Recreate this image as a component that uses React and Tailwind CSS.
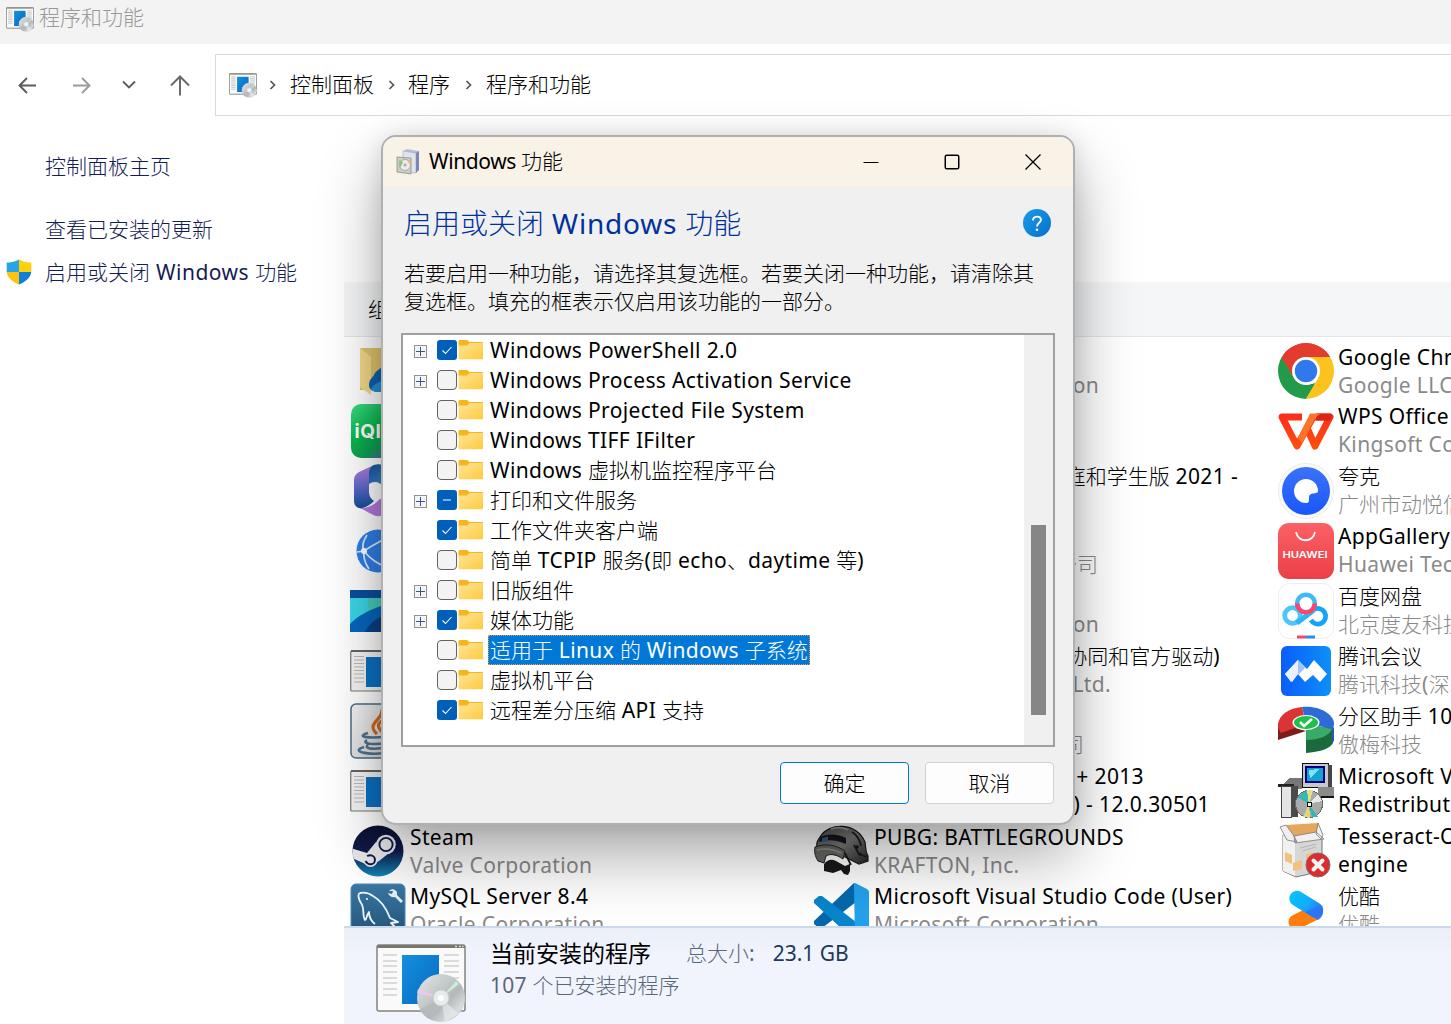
import React from "react";

function T({ children, latin = "tracking-[0.36px]" }) {
  const runs = String(children).match(/[\x20-\x7e]+|[^\x20-\x7e]+/g) || [];
  return runs.map((run, i) =>
    /[\x20-\x7e]/.test(run) ? (
      <span key={i} className={latin}>{run}</span>
    ) : (
      <span key={i} className="font-light">{run}</span>
    )
  );
}

function ProgramsIcon({ className, small }) {
  return (
    <svg viewBox="0 0 90 78" className={className}>
      <defs>
        <linearGradient id="pgBlue" x1="0" y1="0" x2="1" y2="1">
          <stop offset="0" stopColor="#1590de" />
          <stop offset="1" stopColor="#0568c0" />
        </linearGradient>
        <linearGradient id="pgDisc" x1="0" y1="0" x2="1" y2="1">
          <stop offset="0" stopColor="#e4e7e8" />
          <stop offset=".4" stopColor="#c3c8c9" />
          <stop offset=".6" stopColor="#b4b8ba" />
          <stop offset=".8" stopColor="#d9dcdd" />
          <stop offset="1" stopColor="#a9adaf" />
        </linearGradient>
      </defs>
      <rect x="1" y="1" width="88" height="66" rx="2" fill="#fafafa" stroke="#84847e" strokeWidth={small ? 3 : 1.5} />
      <path d="M1 4V3a2 2 0 0 1 2-2h84a2 2 0 0 1 2 2v1z" fill="#77776f" />
      <path d="M79 2.5h2M83 2.5h2M86 2.5h1.5" stroke="#ddd" strokeWidth="1.5" />
      <path d="M7 11h14M7 17h14M7 22h14M7 28h14M7 34h14M7 39h14M7 45h14M7 51h14M68 11h15M68 17h15M68 22h15M68 28h15M68 34h15" stroke="#b9b9b9" strokeWidth={small ? 2.4 : 1.2} />
      <rect x="26" y="11" width="37" height="49" fill="url(#pgBlue)" />
      <circle cx="65" cy="54" r="24" fill="url(#pgDisc)" />
      <path d="M65 54 42 45l-1 4z" fill="#eec9ef" />
      <path d="m65 54 15-17 3 3z" fill="#cdebd6" />
      <path d="m65 54 4 24 14-8z" fill="#e6e8e9" opacity=".7" />
      <path d="m65 54-22 12 9 9z" fill="#b4b8ba" opacity=".8" />
      <circle cx="65" cy="54" r="8" fill="#e9ecec" stroke="#c8ccd0" />
      <circle cx="65" cy="54" r="3" fill="#fff" />
    </svg>
  );
}

function Shield() {
  return (
    <svg viewBox="0 0 26 26" className="h-[26px] w-[26px] shrink-0">
      <defs>
        <clipPath id="shieldClip">
          <path d="M13 .5C10 2.5 5 3.6 .7 3.6V12c0 6.500 6 10.800 12.300 13.500C19.300 22.800 25.300 18.500 25.300 12V3.600C21 3.600 16 2.500 13 .5z" />
        </clipPath>
      </defs>
      <g clipPath="url(#shieldClip)">
        <path fill="#27a3e6" d="M0 0h13v13H0z" />
        <path fill="#ffcf0a" d="M13 0h13v13H13z" />
        <path fill="#ffc20e" d="M0 13h13v13H0z" />
        <path fill="#0f7fdb" d="M13 13h13v13H13z" />
      </g>
    </svg>
  );
}

const OneDriveFolder = () => (
  <>
    <path d="M10 5h40v42H10z" fill="#e2c56c" />
    <path d="m10 5 11 9v38l-11-8z" fill="#f3d98c" />
    <path d="M19 42c0-6 5-9 5-10 2-5 6-5 8-9h17v26H27c-5-1-8-3-8-7z" fill="#0a62b0" />
    <path d="M21 47c2-5 5-7 11-9h18v11H25z" fill="#2690d8" />
  </>
);
const IQiyi = () => (
  <>
    <defs>
      <linearGradient id="iqg" x1="0" y1="0" x2=".7" y2="1">
        <stop offset="0" stopColor="#3edc86" /><stop offset=".45" stopColor="#08b84c" /><stop offset=".75" stopColor="#0d9f54" /><stop offset="1" stopColor="#7454d8" />
      </linearGradient>
    </defs>
    <rect x="1" y="1" width="60" height="54" rx="10" fill="url(#iqg)" />
    <text x="4.500" y="34.500" fontSize="19" fontWeight="700" fill="#fff" letterSpacing=".6" fontFamily="Inter, sans-serif">iQIYI</text>
  </>
);
const M365 = () => (
  <>
    <defs>
      <linearGradient id="m3a" x1="0" y1="0" x2="0" y2="1"><stop offset="0" stopColor="#bb7fe0" /><stop offset=".55" stopColor="#5668c8" /><stop offset="1" stopColor="#134e96" /></linearGradient>
      <linearGradient id="m3b" x1="0" y1="0" x2="1" y2="1"><stop offset="0" stopColor="#164f98" /><stop offset="1" stopColor="#4aa2e6" /></linearGradient>
    </defs>
    <path d="M10 45c9 0 14-3 20-9h16v9L30 53c-5 1-8-2-20-8z" fill="#b579de" />
    <path d="M24 2 9 9c-3 2-5 4-5 8v21c0 5 4 8 8 7 5-1 9-4 12-7-3-2-5-5-5-9V12z" fill="url(#m3a)" />
    <path d="M24 2c-4 2-5 5-5 9v10c4-3 11-3 14 3h13V10L34 3c-3-2-7-2-10-1z" fill="url(#m3b)" />
  </>
);
const Globe = () => (
  <>
    <circle cx="28" cy="28" r="21.500" fill="#2f7fe8" />
    <path d="M14 28c8-6 18-10 34-20M14 28c6 8 12 12 30 20M14 28c-2-4-1-10 3-16M14 28c-1 7 1 12 5 18M7 29l7-1" stroke="#dfeafd" strokeWidth="1.700" fill="none" />
    <circle cx="14" cy="28" r="3" fill="#fff" />
  </>
);
const Waves = () => (
  <>
    <path d="M0 7h56v42H0z" fill="#3bd5e6" />
    <path d="M18 15h38v12H18z" fill="#48cdb8" />
    <path d="M0 7h56v8H0z" fill="#0a4f9c" />
    <path d="M0 41c8-8 18-14 34-19h22v27H0z" fill="#0567bd" />
    <path d="M15 49c4-8 10-13 20-17h21v17z" fill="#0c3f86" />
  </>
);
const WindowGlyph = () => (
  <>
    <rect x=".75" y="8" width="56" height="40" rx="1" fill="#f4f4f4" stroke="#77776f" strokeWidth="1.200" />
    <path d="M1 8h56" stroke="#66665f" strokeWidth="2" />
    <path d="M4 13.500h10M4 17h10M4 20.500h10M4 24h10M4 27.500h10M4 31h10M4 35h10M4 39h10" stroke="#b9b9b9" />
    <path d="M16 14h30v30H16z" fill="#0c72c4" />
  </>
);
const Java = () => (
  <>
    <defs><linearGradient id="jvg" x1="0" y1="0" x2="1" y2="1"><stop offset="0" stopColor="#f2f2f2" /><stop offset="1" stopColor="#cfcfcf" /></linearGradient></defs>
    <rect x="1" y="1" width="60" height="54" rx="5" fill="url(#jvg)" stroke="#4c6c87" strokeWidth="1.500" />
    <path d="M27 31c-12-11 7-14 5-25M33 30c-8-8-5-10 4-16" fill="none" stroke="#d2691e" strokeWidth="3.200" />
    <path d="M18 30c-14 4 3 6 20 3M17 37c-6 4 6 5 21 3M18 42c-5 4 7 5 19 2M14 44c-16 5 8 9 28 5" fill="none" stroke="#4f7391" strokeWidth="2.600" />
  </>
);
const Steam = () => (
  <>
    <defs>
      <linearGradient id="stg" x1="0" y1="0" x2="0" y2="1"><stop offset="0" stopColor="#0b1230" /><stop offset=".5" stopColor="#10194a" /><stop offset="1" stopColor="#1186b5" /></linearGradient>
      <clipPath id="stc"><circle cx="28" cy="28" r="25.500" /></clipPath>
    </defs>
    <circle cx="28" cy="28" r="25.500" fill="url(#stg)" />
    <g clipPath="url(#stc)">
      <path d="M0 25 17 30 26 19l18 7-15 12-9 5L0 34z" fill="#e8e8e8" />
      <circle cx="36" cy="21.500" r="9.800" fill="#e8e8e8" />
      <circle cx="36" cy="21.500" r="6.600" fill="none" stroke="#10194a" strokeWidth="1.900" />
      <circle cx="20.500" cy="37" r="7" fill="#e8e8e8" />
      <path d="M15.500 38c3 5 9 4 9.500-1 0-4-4-6-8-4" fill="none" stroke="#10194a" strokeWidth="1.900" />
    </g>
  </>
);
const MySQL = () => (
  <>
    <defs><linearGradient id="myg" x1="0" y1="0" x2="0" y2="1"><stop offset="0" stopColor="#3b78a5" /><stop offset="1" stopColor="#1d4e70" /></linearGradient></defs>
    <rect x="1" y="1" width="54" height="60" rx="5" fill="url(#myg)" stroke="#4d8bb8" />
    <path d="M25 41c-4-3-6-8-6-12-3 4-2 7-4 8-3-4 0-12-4-17-2-3-4-9-1-10 5-1 9 0 13 3 9 5 14 14 17 22l8 4-7 1 4 4" fill="none" stroke="#eef6fc" strokeWidth="1.800" strokeLinejoin="round" />
    <circle cx="17" cy="16" r="1" fill="#fff" />
    <path d="M39 8c3-3 6-2 8 1v3l6 6-2 2-6-6c-3 1-6-1-7-4l4 1 1-3z" fill="#e8eef3" />
  </>
);
const Helmet = () => (
  <>
    <defs><linearGradient id="hlg" x1="0" y1="0" x2="1" y2="1"><stop offset="0" stopColor="#4b4d4b" /><stop offset=".5" stopColor="#7b7c7a" /><stop offset="1" stopColor="#1f2020" /></linearGradient></defs>
    <path d="M10 41c4-5 8-5 12-3l9 5 5-2v7l-2 4-4-1-3-4-8 3-9-2z" fill="#191919" />
    <path d="M6 14C15-1 43-1 51 19c1 5 0 9 3 14v5l-9 3-14-7-26-6c-4-7-2-10 1-14z" fill="url(#hlg)" stroke="#191a1a" strokeWidth="1.200" />
    <path d="M6 14c9-4 18-3 26 1v6c-9-4-18-5-27-2z" fill="#14161d" />
    <path d="M8 15l6-1.500v5L8 19z" fill="#3b5c78" />
    <path d="M1 24c11-4 21-2 30 4l-2 8c-6-4-12-6-17-3l-2 7-6-2c-3-5-4-9-3-14z" fill="#666763" stroke="#202121" />
    <path d="M3 27c9-2 16-1 24 3" stroke="#8f908b" strokeWidth="1.500" fill="none" />
    <path d="M31 30l6 12M40 22l5 9 8 3M38 9c5 3 8 8 9 14" stroke="#1b1b1b" strokeWidth="1.800" fill="none" />
    <circle cx="43" cy="24" r="1.800" fill="#161616" /><circle cx="46" cy="31" r="1.600" fill="#161616" />
    <path d="M17 6c5-2 12-2 17 1" stroke="#a3a4a0" strokeWidth="1.500" fill="none" />
  </>
);
const VSCode = () => (
  <g transform="translate(-1 0)">
    <path d="M41 0 1 38v3l5 4h3l34-26z" fill="#0568ad" />
    <path d="M1 17l5-4h3l34 26v20L1 20z" fill="#0785cc" />
    <path d="M41 0c1 0 2 0 3 1l10 5c1 1 2 2 2 3v51H42z" fill="#23a2ec" />
  </g>
);
const Chrome = () => (
  <>
    <defs><clipPath id="chc"><circle cx="28" cy="28" r="28" /></clipPath></defs>
    <g clipPath="url(#chc)">
      <path d="M0 0h56v14H28L16 35 3 14z" fill="#e33b2e" />
      <path d="M3.700 14 16 35l12 7 10-2-10 16H0V14z" fill="#229a49" />
      <path d="M28 14h28v42H28l12.100-21z" fill="#fcc31e" />
      <path d="M28 14h24.300A28 28 0 0 0 3.700 14L15.900 35A14 14 0 0 1 28 14z" fill="#e33b2e" />
    </g>
    <circle cx="28" cy="28" r="14" fill="#fff" />
    <circle cx="28" cy="28" r="11.200" fill="#3079ec" />
  </>
);
const WPS = () => (
  <>
    <defs><linearGradient id="wpg" x1="0" y1="10" x2="0" y2="46" gradientUnits="userSpaceOnUse"><stop offset="0" stopColor="#fa2c1c" /><stop offset="1" stopColor="#ff4f0c" /></linearGradient></defs>
    <path d="M24 14H4L19 43 35 14M29 25l8 18L52 14H38" fill="none" stroke="url(#wpg)" strokeWidth="7" strokeLinejoin="round" />
    <path d="M39 10.500h13.500c1.500 0 2 1 1.500 2.500l-2 4.500H37z" fill="#dd2412" />
    <path d="M32 10.500h12c-4 1-6 3-8 7L24 41l-4-6z" fill="#fd7428" />
  </>
);
const Quark = () => (
  <>
    <defs><linearGradient id="qkg" x1="0" y1="0" x2="0" y2="1"><stop offset="0" stopColor="#3c72fa" /><stop offset="1" stopColor="#1857fb" /></linearGradient></defs>
    <circle cx="28" cy="28" r="27.500" fill="#fafafa" stroke="#ececee" />
    <circle cx="28" cy="28" r="24" fill="url(#qkg)" />
    <path d="M28 40a12 12 0 1 1 12-12c0 4-9 0-9 7 0 3 0 5-3 5z" fill="#fff" />
  </>
);
const Huawei = () => (
  <>
    <defs><linearGradient id="hwg" x1="0" y1="0" x2="0" y2="1"><stop offset="0" stopColor="#fb6165" /><stop offset="1" stopColor="#ec3f48" /></linearGradient></defs>
    <rect width="56" height="56" rx="11" fill="url(#hwg)" />
    <path d="M18 9c2 11 17 11 19 0" fill="none" stroke="#fff" strokeWidth="1.800" />
    <text x="4.500" y="34.700" fontSize="9.300" fontWeight="600" fill="#fff" textLength="45" lengthAdjust="spacingAndGlyphs" fontFamily="Inter, sans-serif">HUAWEI</text>
  </>
);
const Baidu = () => (
  <>
    <rect x=".5" y=".5" width="55" height="55" rx="11" fill="#fff" stroke="#eee" />
    <circle cx="14.500" cy="32.500" r="7.800" fill="none" stroke="#4cc6fb" strokeWidth="4.800" />
    <path d="M33 37a7.800 7.800 0 1 0 3-10.500" fill="none" stroke="#12a4fa" strokeWidth="4.800" />
    <path d="M19 40 36 27" stroke="#2fb4f9" strokeWidth="4.800" />
    <path d="M37 40 20 27" stroke="#fff" strokeWidth="0" />
    <circle cx="28" cy="20.500" r="8.800" fill="#fff" stroke="#3fb9f7" strokeWidth="4.500" />
    <path d="M19.200 20.500a8.800 8.800 0 0 0 17.600 0" fill="none" stroke="#f8476e" strokeWidth="4.500" />
    <path d="M19 52.500h9v3h-9z" fill="#f8476e" /><path d="M28 52.500h9v3h-9z" fill="#2191f4" />
  </>
);
const Tencent = () => (
  <>
    <defs><linearGradient id="txg" x1="0" y1="0" x2="1" y2="0"><stop offset="0" stopColor="#0a5cfc" /><stop offset="1" stopColor="#0d90f8" /></linearGradient></defs>
    <rect x="3" y="3" width="50" height="50" rx="6" fill="url(#txg)" />
    <path d="m7 31 13-14 9 9 7-9 13 14-7 8-7-7-8 7-7-8-6 8z" fill="#fff" />
    <path d="m7 31 13-14v14l-7 8z" fill="#eaf0fd" /><path d="m20 17 7 8-7 7z" fill="#9fc3fb" />
  </>
);
const Partition = () => (
  <>
    <path d="M0 20v17l28-9z" fill="#7c1c1c" />
    <path d="M28 28v22c13-1 24-4 27-10V22z" fill="#1b6a3d" />
    <path d="M54 26c2-1 2-4 2-6v18l-2 2z" fill="#2a57b4" />
    <path d="M0 21C1 12 11 5 24 4l4 17L3 30C1 27 0 25 0 21z" fill="#dc3434" />
    <path d="M24 4c18-2 33 8 32 18l-2 4-26-6z" fill="#2f6bd6" />
    <path d="M28 20l26 6c-3 7-13 11-26 11z" fill="#3aaa68" />
    <ellipse cx="28" cy="19.500" rx="13.500" ry="7.500" fill="#fff" /><ellipse cx="28" cy="19.500" rx="12" ry="6.500" fill="#1fbf4b" />
    <path d="m22 19 4 4 8-7" stroke="#fff" strokeWidth="2.600" fill="none" />
  </>
);
const Redist = () => (
  <g shapeRendering="crispEdges">
    <path d="M24 0h26v24H24z" fill="#c9c9c9" stroke="#111" />
    <path d="M50 2h4v22h-4z" fill="#444" />
    <path d="M27 3h20v17H27z" fill="#000084" />
    <path d="M29 5h16v13H29z" fill="#12a3cf" /><path d="M31 7l10-1-9 10z" fill="#80e4f4" />
    <path d="M40 24h16v9H40z" fill="#8a8a8a" /><path d="M40 33h16v2H40z" fill="#111" />
    <path d="M3 23l9-8h12v11H3z" fill="#777" /><path d="M0 21h16v3H0z" fill="#222" />
    <path d="M3 23h10v31H3z" fill="#e4e4e4" stroke="#444" /><path d="M13 23h7v31h-7z" fill="#4a4a4a" />
    <circle cx="31" cy="41" r="13.500" fill="#aaa" stroke="#666" />
    <path d="M31 41 19 34l10-7z" fill="#36b8b4" /><path d="M31 41l-2-14h6z" fill="#e4e184" /><path d="M31 41l3 13h6z" fill="#31b7b3" /><path d="M31 41l-6 13 7 1z" fill="#ded778" /><path d="M31 41l13-3-4-7z" fill="#e8e8e8" />
    <path d="M29 39h5v5h-5z" fill="#111" /><path d="M30 40h3v3h-3z" fill="#fff" />
  </g>
);
const Tesseract = () => (
  <>
    <path d="M5 12 17 17l27-3v34l-26 6L5 48z" fill="#d6d6d6" stroke="#777" />
    <path d="M5 12l12 6v35L5 48z" fill="#f1f1f1" />
    <path d="M8 2l32-2 5 12-27 4z" fill="#e3a85b" />
    <path d="M8 2 2 4l7 13 10 2-3-6zM40 0l5 12-2 4-5-5zM16 13l22-4 8 7-29 4z" fill="#f0f0f0" stroke="#777" strokeWidth=".8" />
    <path d="M7 29l7 3v9l-7-3zM15 40l9-3v9l-9 2zM28 31l8-2v9l-8 2z" fill="#f2c27c" />
    <path d="M22 25l16-4M24 28l14-4" stroke="#b5b5b5" />
    <circle cx="40" cy="42" r="12" fill="#dc2c30" stroke="#8b6b6c" />
    <path d="m35.500 37.500 9 9m0-9-9 9" stroke="#f3f3f3" strokeWidth="4" strokeLinecap="round" />
  </>
);
const Youku = () => (
  <>
    <defs><linearGradient id="ykg" x1="11" y1="8" x2="45" y2="36" gradientUnits="userSpaceOnUse"><stop offset="0" stopColor="#04c8fd" /><stop offset=".5" stopColor="#12acfc" /><stop offset="1" stopColor="#2b62f4" /></linearGradient></defs>
    <path d="M36 30 18 39" stroke="#ff7d0c" strokeWidth="15" strokeLinecap="round" />
    <path d="M19 15.500 37.500 27" stroke="url(#ykg)" strokeWidth="15.500" strokeLinecap="round" />
    <path d="M27 29l14-6c6 4 5 10-1 14z" fill="#2f72f5" opacity=".9" />
  </>
);

const PROGRAMS = [
  { icon: OneDriveFolder }, { icon: IQiyi }, { icon: M365 }, { icon: Globe }, { icon: Waves },
  { icon: WindowGlyph }, { icon: Java }, { icon: WindowGlyph },
  { icon: Steam, name: "Steam", by: "Valve Corporation" },
  { icon: MySQL, name: "MySQL Server 8.4", by: "Oracle Corporation" },
  { by: "Microsoft Corporation", fit: "w-[224px]" },
  {},
  { name: "家庭和学生版 2021 -", fit: "w-[364px]" },
  { by: "公司", fit: "w-[224px]" },
  { by: "Microsoft Corporation", fit: "w-[224px]" },
  { name: "协同和官方驱动)", by: "Ltd.", fit: "w-[346px]", byFit: "w-[237px]" },
  { by: "公司", fit: "w-[210px]" },
  { name: "+ 2013", name2: "(x86) - 12.0.30501", fit: "w-[270px]", byFit: "w-[336px]" },
  { icon: Helmet, name: "PUBG: BATTLEGROUNDS", by: "KRAFTON, Inc." },
  { icon: VSCode, name: "Microsoft Visual Studio Code (User)", by: "Microsoft Corporation" },
  { icon: Chrome, name: "Google Chrome", by: "Google LLC" },
  { icon: WPS, name: "WPS Office", by: "Kingsoft Corp." },
  { icon: Quark, name: "夸克", by: "广州市动悦信息" },
  { icon: Huawei, name: "AppGallery", by: "Huawei Technologies" },
  { icon: Baidu, name: "百度网盘", by: "北京度友科技" },
  { icon: Tencent, name: "腾讯会议", by: "腾讯科技(深圳)" },
  { icon: Partition, name: "分区助手 10.4", by: "傲梅科技" },
  { icon: Redist, name: "Microsoft Visual", name2: "Redistributable" },
  { icon: Tesseract, name: "Tesseract-OCR", name2: "engine" },
  { icon: Youku, name: "优酷", by: "优酷" },
];

function Program({ icon: Icon, name, name2, by, fit, byFit, first }) {
  const align = fit ? "text-right " + fit : "";
  const align2 = fit ? "text-right " + (byFit || fit) : "";
  return (
    <div className="flex h-[60px] items-start gap-1 whitespace-nowrap">
      <svg viewBox="0 0 56 56" className="h-14 w-14 shrink-0 overflow-visible">{Icon && <Icon />}</svg>
      <div className={first ? "leading-7" : "-mt-px leading-7"}>
        <div className={"h-7 text-black " + align}><T>{name || ""}</T></div>
        <div className={(name2 ? "h-7 text-black " : "h-7 text-[#8a8a8a] ") + align2}><T>{name2 || by || ""}</T></div>
      </div>
    </div>
  );
}

const FEATURES = [
  ["Windows PowerShell 2.0", "on", true],
  ["Windows Process Activation Service", "off", true],
  ["Windows Projected File System", "off"],
  ["Windows TIFF IFilter", "off"],
  ["Windows 虚拟机监控程序平台", "off"],
  ["打印和文件服务", "some", true],
  ["工作文件夹客户端", "on"],
  ["简单 TCPIP 服务(即 echo、daytime 等)", "off"],
  ["旧版组件", "off", true],
  ["媒体功能", "on", true],
  ["适用于 Linux 的 Windows 子系统", "off", false, true],
  ["虚拟机平台", "off"],
  ["远程差分压缩 API 支持", "on"],
];

function Feature({ label, state, expandable, selected }) {
  return (
    <div className="flex h-[30px] items-center">
      <span className="mt-0.5 flex h-[13px] w-[13px] shrink-0">
        {expandable && (
          <svg viewBox="0 0 13 13" className="h-[13px] w-[13px]" shapeRendering="crispEdges">
            <rect x=".5" y=".5" width="12" height="12" fill="#f4f4f4" stroke="#919191" />
            <path d="M2 6.500h9M6.500 2v9" stroke="#38549a" />
          </svg>
        )}
      </span>
      <svg viewBox="0 0 20 20" className="ml-[10px] h-5 w-5 shrink-0">
        {state === "off" ? (
          <rect x=".5" y=".5" width="19" height="19" rx="3.500" fill="#f3f3f3" stroke="#626262" />
        ) : (
          <rect width="20" height="20" rx="3" fill="#005fb8" />
        )}
        {state === "on" && <path d="m5.500 10.500 3 3 6-6.500" fill="none" stroke="#fff" strokeWidth="1.100" />}
        {state === "some" && <path d="M6 10h8" stroke="#9cc4e6" strokeWidth="1.600" />}
      </svg>
      <svg viewBox="0 0 25 20" className="ml-px h-5 w-[25px] shrink-0">
        <defs><linearGradient id="fold" x1="0" y1="0" x2="1" y2="1"><stop offset="0" stopColor="#ffe59c" /><stop offset="1" stopColor="#ffcb3c" /></linearGradient></defs>
        <path d="M.5 1.500C.5.500 1 0 2 0h7l2.500 2H24c.5 0 1 .5 1 1v4H.5z" fill="#f7b41c" />
        <path d="M.5 5.500h8.500l2.500-2.500H25v15c0 .8-.4 1.300-1 1.300H1.500c-.6 0-1-.5-1-1z" fill="url(#fold)" />
      </svg>
      <span
        className={
          "ml-[5px] h-[30px] whitespace-nowrap border border-dotted px-[1px] leading-[28px] " +
          (selected ? "border-[#f59a3a] bg-[#0078d7] text-white" : "border-transparent text-black")
        }
      >
        <T>{label}</T>
      </span>
    </div>
  );
}

function Crumb() {
  return (
    <svg viewBox="0 0 8 12" className="h-3 w-2 shrink-0">
      <path d="m1.500 2 4 4-4 4" fill="none" stroke="#555" strokeWidth="1.700" />
    </svg>
  );
}

function Dialog() {
  return (
    <div className="absolute left-[381px] top-[135px] flex h-[690px] w-[694px] flex-col overflow-hidden rounded-[15px] border-2 border-[#b0b0b0] bg-[#f0f0f0] shadow-[0_32px_64px_rgba(0,0,0,0.33),0_2px_24px_rgba(0,0,0,0.12)]">
      <div className="flex h-[50px] shrink-0 items-center bg-[#f9f2e7] pl-3">
        <svg viewBox="0 0 26 28" className="h-7 w-[26px]">
          <path d="M8 3 12 1l12 2-3 3z" fill="#b9bedb" />
          <path d="M8 3l13 2v20L8 24z" fill="#dfe3ee" stroke="#a0a5ba" strokeWidth=".6" />
          <path d="M21 5l3-2v19l-3 3z" fill="#7d86b8" />
          <path d="M2 9l14 1v16L2 24z" fill="#c9cec8" stroke="#8c8f8b" strokeWidth=".8" />
          <circle cx="10" cy="17" r="5.500" fill="#eeeaea" stroke="#a9a9a9" /><circle cx="10" cy="17" r="1.500" fill="#aaa" />
          <path d="M4 12l4 2-3 6z" fill="#8bc26a" /><path d="M13 14l3-3v6z" fill="#dfb36b" />
        </svg>
        <span className="-mt-0.5 ml-[8px]"><T latin="tracking-[-0.4px]">Windows 功能</T></span>
        <div className="-mt-px ml-auto flex items-center pr-[32px]">
          <svg viewBox="0 0 16 16" className="h-4 w-4"><path d="M.5 8.500h15" stroke="#000" /></svg>
          <svg viewBox="0 0 16 16" className="ml-[65px] h-4 w-4"><rect x="1.250" y="1.250" width="13.500" height="13.500" rx="1.500" fill="none" stroke="#000" strokeWidth="1.500" /></svg>
          <svg viewBox="0 0 16 16" className="ml-[65px] h-4 w-4"><path d="m.5.5 15 15m0-15-15 15" stroke="#000" strokeWidth="1.300" /></svg>
        </div>
      </div>
      <div className="flex h-[72px] shrink-0 items-center justify-between pl-[21px] pr-[22px]">
        <h1 className="text-[28px] leading-[36px] text-[#003399]"><T latin="tracking-[0.78px]">启用或关闭 Windows 功能</T></h1>
        <svg viewBox="0 0 28 28" className="h-7 w-7">
          <defs><linearGradient id="help" x1="0" y1="0" x2="1" y2="1"><stop offset="0" stopColor="#1c9ae4" /><stop offset="1" stopColor="#0572cf" /></linearGradient></defs>
          <circle cx="14" cy="14" r="14" fill="url(#help)" />
          <path d="M10 11.500c0-5 8-5 8-.7 0 3-4 3-4 6.700" fill="none" stroke="#fff" strokeWidth="1.900" /><circle cx="14" cy="20.800" r="1.300" fill="#fff" />
        </svg>
      </div>
      <p className="h-[74px] shrink-0 whitespace-nowrap pl-[21px] font-light leading-7">
        若要启用一种功能，请选择其复选框。若要关闭一种功能，请清除其<br />复选框。填充的框表示仅启用该功能的一部分。
      </p>
      <div className="ml-[18px] flex h-[414px] w-[654px] shrink-0 justify-between border-2 border-[#a0a0a0] bg-white">
        <div className="pl-[11px]">
          {FEATURES.map(([label, state, expandable, selected]) => (
            <Feature key={label} label={label} state={state} expandable={expandable} selected={selected} />
          ))}
        </div>
        <div className="w-[29px] bg-[#f0f0f0] pl-[7px] pt-[190px]">
          <div className="h-[190px] w-[15px] bg-[#868686]" />
        </div>
      </div>
      <div className="mt-[15px] flex justify-end gap-4 pr-[19px]">
        <button className="h-[42px] w-[129px] rounded border border-[#0078d4] bg-[#fdfdfd]"><T>确定</T></button>
        <button className="h-[42px] w-[129px] rounded border border-[#d0d0d0] bg-[#fdfdfd]"><T>取消</T></button>
      </div>
    </div>
  );
}

export default function App() {
  return (
    <div className="relative flex h-[1024px] w-[1451px] flex-col overflow-hidden bg-white font-['Noto_Sans','Noto_Sans_CJK_SC',sans-serif] text-[21px] leading-7 text-black">
      <header className="flex h-[44px] shrink-0 items-start bg-[#f3f3f3] pl-1.5 pt-[3px] text-[#999]">
        <ProgramsIcon small className="mt-1 h-[25px] w-7" />
        <span className="ml-[5px]"><T>程序和功能</T></span>
      </header>
      <nav className="flex h-[72px] shrink-0 pt-[10px]">
        <div className="flex w-[215px] shrink-0 items-center pl-[18px] text-[#666]">
          <svg viewBox="0 0 20 20" className="h-5 w-5"><path d="M18 10.500H1.500M9 3 1.500 10.500 9 18" fill="none" stroke="#5c5c5c" strokeWidth="1.900" /></svg>
          <svg viewBox="0 0 20 20" className="ml-[34px] h-5 w-5"><path d="M1 10.500h16.500M10 3l7.500 7.500L10 18" fill="none" stroke="#9c9c9c" strokeWidth="1.900" /></svg>
          <svg viewBox="0 0 14 14" className="ml-[30px] h-3.5 w-3.5"><path d="m1 3.500 6 6 6-6" fill="none" stroke="#5c5c5c" strokeWidth="1.900" /></svg>
          <svg viewBox="0 0 22 22" className="ml-[33px] h-[22px] w-[22px]"><path d="M11 21.500V2.500M2 11.500l9-9 9 9" fill="none" stroke="#6a6a6a" strokeWidth="2" /></svg>
        </div>
        <div className="flex grow items-center border border-r-0 border-[#d9d9d9] pl-[13px]">
          <ProgramsIcon small className="h-[25px] w-7" />
          <span className="ml-3"><Crumb /></span>
          <span className="-mt-0.5 ml-[13px]"><T>控制面板</T></span>
          <span className="ml-[14px]"><Crumb /></span>
          <span className="-mt-0.5 ml-[12px]"><T>程序</T></span>
          <span className="ml-[15px]"><Crumb /></span>
          <span className="-mt-0.5 ml-[13px]"><T>程序和功能</T></span>
        </div>
      </nav>
      <div className="flex min-h-0 grow">
        <aside className="w-[344px] shrink-0 pt-9 text-[#151c55]">
          <div className="h-[63px] pl-[45px]"><T>控制面板主页</T></div>
          <div className="h-[43px] pl-[45px]"><T>查看已安装的更新</T></div>
          <div className="flex h-7 items-center whitespace-nowrap pl-1.5">
            <Shield />
            <span className="ml-[13px]"><T latin="tracking-[0.5px]">启用或关闭 Windows 功能</T></span>
          </div>
        </aside>
        <main className="flex min-w-0 grow flex-col pt-[166px]">
          <div className="flex h-[55px] shrink-0 items-center border-b border-[#e4e5e7] bg-[#f5f6f7] pl-6"><T>组织</T></div>
          <div className="grid h-[589px] shrink-0 auto-cols-[464px] grid-flow-col grid-rows-[repeat(10,60px)] overflow-hidden pl-1.5 pt-1.5">
            {PROGRAMS.map((program, i) => (
              <Program key={i} first={i % 10 === 0 || i === 8 || i === 18} {...program} />
            ))}
          </div>
          <footer className="flex grow items-start border-t-2 border-[#ccd9ea] bg-gradient-to-b from-[#ebeff8] to-[#f1f4fc] to-30% pl-8">
            <ProgramsIcon className="mt-4 h-[78px] w-[90px]" />
            <div className="ml-6 pt-[11px]">
              <div className="flex h-7 items-center">
                <span className="text-[23px]">当前安装的程序</span>
                <span className="ml-[35px] text-[#5a6779]"><T latin="tracking-normal">总大小:</T></span>
                <span className="ml-[18px] text-[#1e395b]"><T latin="tracking-normal">23.1 GB</T></span>
              </div>
              <div className="mt-1 text-[#5a6779]"><T latin="tracking-[0.25px]">107 个已安装的程序</T></div>
            </div>
          </footer>
        </main>
      </div>
      <Dialog />
    </div>
  );
}
